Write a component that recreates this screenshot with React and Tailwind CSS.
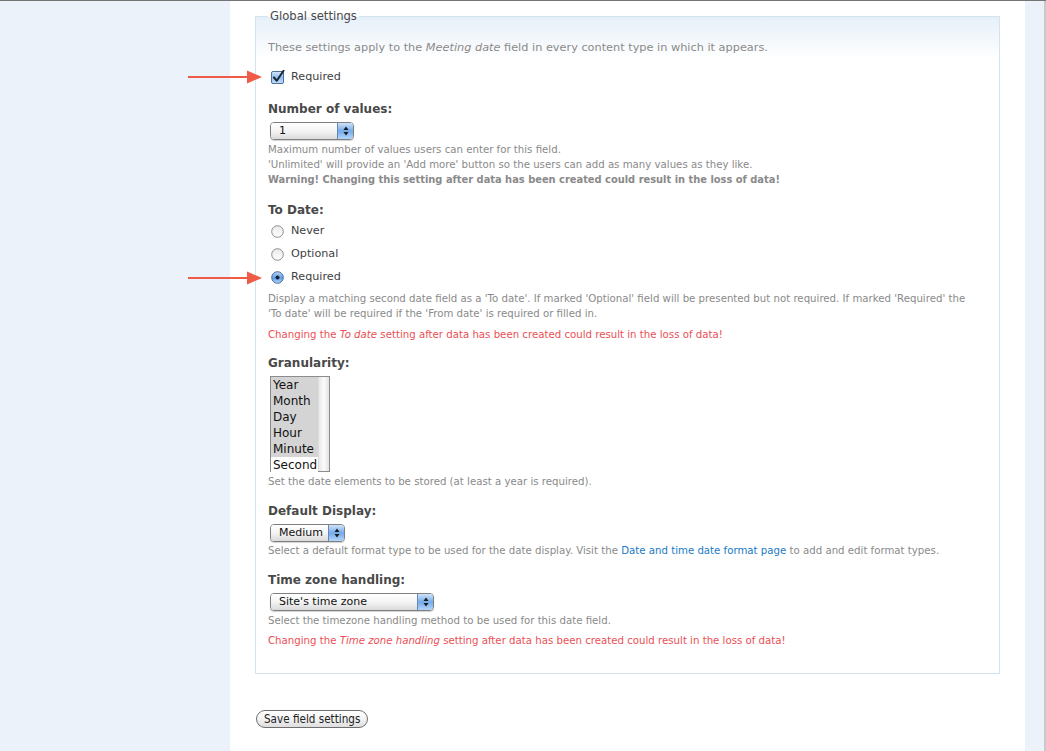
import React from "react";

function Arrow() {
  return (
    <svg
      className="absolute left-[-80px] top-1/2 -translate-y-1/2"
      width="74"
      height="14"
      viewBox="0 0 74 14"
    >
      <line x1="0" y1="7" x2="62" y2="7" stroke="#ef5b46" strokeWidth="2" />
      <polygon points="59,0.5 74,7 59,13.5" fill="#ef5b46" />
    </svg>
  );
}

function Checkbox() {
  return (
    <svg width="14" height="14" viewBox="0 0 14 14" className="ml-[3px] shrink-0">
      <defs>
        <linearGradient id="cbg" x1="0" y1="0" x2="0" y2="1">
          <stop offset="0" stopColor="#d6e8fb" />
          <stop offset="0.5" stopColor="#8fbdf0" />
          <stop offset="1" stopColor="#c5e0fb" />
        </linearGradient>
      </defs>
      <rect x="0.5" y="1.5" width="12" height="12" rx="1.5" fill="url(#cbg)" stroke="#4d6f99" />
      <path d="M3 7.5 L5.8 10.8 L12.5 0.8" fill="none" stroke="#1b2735" strokeWidth="2" strokeLinecap="round" strokeLinejoin="round" />
    </svg>
  );
}

function Radio({ checked }) {
  return (
    <svg width="13" height="13" viewBox="0 0 13 13" className="ml-[3px] shrink-0">
      <defs>
        <linearGradient id="rg0" x1="0" y1="0" x2="0" y2="1">
          <stop offset="0" stopColor="#e9e9e9" />
          <stop offset="1" stopColor="#ffffff" />
        </linearGradient>
        <linearGradient id="rg1" x1="0" y1="0" x2="0" y2="1">
          <stop offset="0" stopColor="#b9d6f6" />
          <stop offset="0.55" stopColor="#5e9de6" />
          <stop offset="1" stopColor="#b7dafb" />
        </linearGradient>
      </defs>
      <circle cx="6.5" cy="6.5" r="5.8" fill={checked ? "url(#rg1)" : "url(#rg0)"} stroke={checked ? "#4a6a95" : "#8d8d8d"} strokeWidth="1" />
      {checked && <circle cx="6.5" cy="6.5" r="2" fill="#1c2430" />}
    </svg>
  );
}

function Select({ className, label }) {
  return (
    <div
      className={`flex h-[18px] rounded-[4px] border border-[#7f7f7f] overflow-hidden shadow-[0_1px_1px_rgba(0,0,0,0.18)] ${className}`}
    >
      <div className="flex-1 flex items-center pl-[8px] text-[11px] text-[#111] bg-gradient-to-b from-white via-[#f4f4f4] to-[#dadada]">
        {label}
      </div>
      <div className="w-[16px] flex items-center justify-center border-l border-[#6786b3] bg-gradient-to-b from-[#cfe3f9] via-[#74aaeb] to-[#b4d6fa]">
        <svg width="6" height="10" viewBox="0 0 6 10">
          <polygon points="3,0.5 5.5,4 0.5,4" fill="#1b1b1b" />
          <polygon points="3,9.5 5.5,6 0.5,6" fill="#1b1b1b" />
        </svg>
      </div>
    </div>
  );
}

const Label = ({ children, className = "" }) => (
  <div className={`text-[12px] leading-[16px] font-bold text-[#494949] ${className}`}>{children}</div>
);

const Desc = ({ children, className = "" }) => (
  <div className={`text-[10.2px] leading-[15px] text-[#8a8a8a] ${className}`}>{children}</div>
);

const Red = ({ children, className = "" }) => (
  <div className={`text-[10.2px] leading-[15px] text-[#ea4f55] ${className}`}>{children}</div>
);

export default function App() {
  const gran = ["Year", "Month", "Day", "Hour", "Minute", "Second"];
  return (
    <div
      className="w-[1046px] h-[751px] overflow-hidden flex border-t border-[#747474] bg-white"
      style={{ fontFamily: '"DejaVu Sans", Verdana, sans-serif' }}
    >
      <div className="w-[230px] shrink-0 bg-[#ebf2fa]" />
      <div className="w-[795px] shrink-0 bg-white pl-[25px] pt-[8px]">
        <fieldset className="w-[745px] border border-[#d3e4f1] px-[12px] pt-[17px] pb-[25px] bg-[linear-gradient(to_bottom,#e6eff8_0px,#ffffff_42px,#ffffff_100%)]">
          <legend className="px-[2px] text-[11.6px] leading-[14px] text-[#494949]">Global settings</legend>
          <div className="text-[11.3px] leading-[15px] text-[#8a8a8a]">
            These settings apply to the <em>Meeting date</em> field in every content type in which it appears.
          </div>

          <div className="relative flex items-center h-[16px] mt-[14px]">
            <Arrow />
            <Checkbox />
            <span className="ml-[6px] text-[11.2px] text-[#3f3f3f]">Required</span>
          </div>

          <Label className="mt-[16px]">Number of values:</Label>
          <Select className="w-[84px] mt-[5px] ml-[2px]" label="1" />
          <Desc className="mt-[2px]">
            Maximum number of values users can enter for this field.
            <br />
            'Unlimited' will provide an 'Add more' button so the users can add as many values as they like.
            <br />
            <b className="text-[9.9px]">Warning! Changing this setting after data has been created could result in the loss of data!</b>
          </Desc>

          <Label className="mt-[15px]">To Date:</Label>
          <div className="mt-[2px]">
            {[
              ["Never", false],
              ["Optional", false],
              ["Required", true],
            ].map(([t, c]) => (
              <div key={t} className="relative flex items-center h-[23px]">
                {c && <Arrow />}
                <Radio checked={c} />
                <span className="ml-[7px] text-[11.2px] text-[#3f3f3f]">{t}</span>
              </div>
            ))}
          </div>
          <Desc className="mt-[2px]">
            Display a matching second date field as a 'To date'. If marked 'Optional' field will be presented but not required. If marked 'Required' the
            <br />
            'To date' will be required if the 'From date' is required or filled in.
          </Desc>
          <Red className="mt-[6px]">
            Changing the <em>To date</em> setting after data has been created could result in the loss of data!
          </Red>

          <Label className="mt-[13px]">Granularity:</Label>
          <div className="flex w-[60px] h-[96px] mt-[5px] ml-[2px] border border-[#8c8c8c] bg-white">
            <div className="w-[47px] flex flex-col">
              {gran.map((g, i) => (
                <div
                  key={g}
                  className={`h-[16px] leading-[16px] text-[12px] pl-[2px] text-[#111] ${i < 5 ? "bg-[#d4d4d4]" : "bg-white"}`}
                >
                  {g}
                </div>
              ))}
            </div>
            <div className="flex-1 bg-gradient-to-r from-[#e9e9e9] via-[#fbfbfb] to-[#e2e2e2] border-l border-[#dcdcdc]" />
          </div>
          <Desc className="mt-[2px]">Set the date elements to be stored (at least a year is required).</Desc>

          <Label className="mt-[14px]">Default Display:</Label>
          <Select className="w-[75px] mt-[5px] ml-[2px]" label="Medium" />
          <Desc className="mt-[1px]">
            Select a default format type to be used for the date display. Visit the{" "}
            <span className="text-[#1a7ac4]">Date and time date format page</span> to add and edit format types.
          </Desc>

          <Label className="mt-[14px]">Time zone handling:</Label>
          <Select className="w-[164px] mt-[5px] ml-[2px]" label="Site's time zone" />
          <Desc className="mt-[2px]">Select the timezone handling method to be used for this date field.</Desc>
          <Red className="mt-[5px]">
            Changing the <em>Time zone handling</em> setting after data has been created could result in the loss of data!
          </Red>
        </fieldset>

        <button
          className="mt-[36px] ml-[1px] h-[18px] px-[7px] rounded-full border border-[#6f6f6f] bg-gradient-to-b from-white via-[#f3f3f3] to-[#dedede] text-[11.6px] leading-[16px] text-[#222]"
          style={{ fontFamily: '"DejaVu Sans Condensed", "DejaVu Sans", sans-serif', fontStretch: "condensed" }}
        >
          Save field settings
        </button>
      </div>
      <div className="w-[21px] shrink-0 bg-[#ebf2fa] border-r-2 border-[#c9c9c9]" />
    </div>
  );
}
